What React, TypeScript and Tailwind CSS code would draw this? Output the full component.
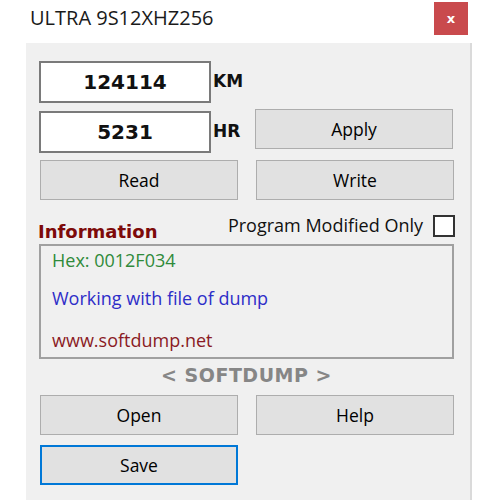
import React from "react";

const ui = { fontFamily: '"Open Sans", "Noto Sans", sans-serif' };
const tahoma = { fontFamily: '"DejaVu Sans", Verdana, sans-serif' };

const Btn = ({ label, focused }: { label: string; focused?: boolean }) => (
  <div
    className={
      "h-[40px] w-[198px] flex items-center justify-center bg-[#e1e1e1] text-[17.5px] text-black " +
      (focused ? "border-2 border-[#0078d7]" : "border border-[#adadad]")
    }
    style={ui}
  >
    {label}
  </div>
);

const Field = ({ value, unit }: { value: string; unit: string }) => (
  <div className="flex items-center">
    <div
      className="h-[42px] w-[172px] bg-white border-2 border-[#7a7a7a] flex items-center justify-center text-[20px] font-bold text-[#111]"
      style={tahoma}
    >
      {value}
    </div>
    <span className="ml-[2px] text-[17px] font-bold text-[#111]" style={tahoma}>
      {unit}
    </span>
  </div>
);

export default function App() {
  return (
    <div className="w-[500px] h-[500px] bg-white flex flex-col overflow-hidden">
      <div className="h-[43px] flex items-start shrink-0">
        <span className="pl-[30px] pt-[3px] text-[20px] text-[#1a1a1a]" style={ui}>
          ULTRA 9S12XHZ256
        </span>
        <div className="ml-auto mr-[32px] mt-[2px] w-[34px] h-[33px] bg-[#c94a4d] flex items-center justify-center text-white text-[13px] font-bold" style={tahoma}>
          x
        </div>
      </div>
      <div className="flex flex-1">
        <div className="w-[26px] shrink-0" />
        <div className="w-[446px] bg-[#f0f0f0] border-r-2 border-[#dadada] pl-[13px] pt-[18px] flex flex-col">
          <div className="flex flex-col">
            <Field value="124114" unit="KM" />
            <div className="flex items-start mt-[8px]">
              <Field value="5231" unit="HR" />
              <div className="ml-auto mr-[17px] -mt-[2px]">
                <Btn label="Apply" />
              </div>
            </div>
            <div className="flex mt-[7px] pl-[1px] gap-[18px]">
              <Btn label="Read" />
              <Btn label="Write" />
            </div>
          </div>
          <div className="flex items-end mt-[12px] h-[32px] pr-[15px]">
            <span className="text-[18px] font-bold text-[#7d0a0a] leading-none pb-[3px] -ml-[1px]" style={tahoma}>
              Information
            </span>
            <div className="ml-auto flex items-center self-start">
              <span className="text-[18px] text-[#111]" style={ui}>
                Program Modified Only
              </span>
              <div className="ml-[10px] w-[22px] h-[22px] bg-white border-2 border-[#333]" />
            </div>
          </div>
          <div className="w-[415px] h-[115px] border-2 border-[#a0a0a0] bg-[#f0f0f0] pl-[11px] pt-[3px] text-[18px] flex flex-col" style={ui}>
            <span className="text-[#2f8a3a] leading-[22px]">Hex: 0012F034</span>
            <span className="text-[#2d2dc8] leading-[22px] mt-[16px]">Working with file of dump</span>
            <span className="text-[#8a1a24] leading-[22px] mt-[20px]">www.softdump.net</span>
          </div>
          <div className="w-[415px] text-center mt-[4px] text-[19px] tracking-[0.5px] font-bold text-[#868686] leading-[24px]" style={tahoma}>
            &lt; SOFTDUMP &gt;
          </div>
          <div className="flex mt-[8px] pl-[1px] gap-[18px]">
            <Btn label="Open" />
            <Btn label="Help" />
          </div>
          <div className="flex mt-[10px] pl-[1px]">
            <Btn label="Save" focused />
          </div>
        </div>
      </div>
    </div>
  );
}
